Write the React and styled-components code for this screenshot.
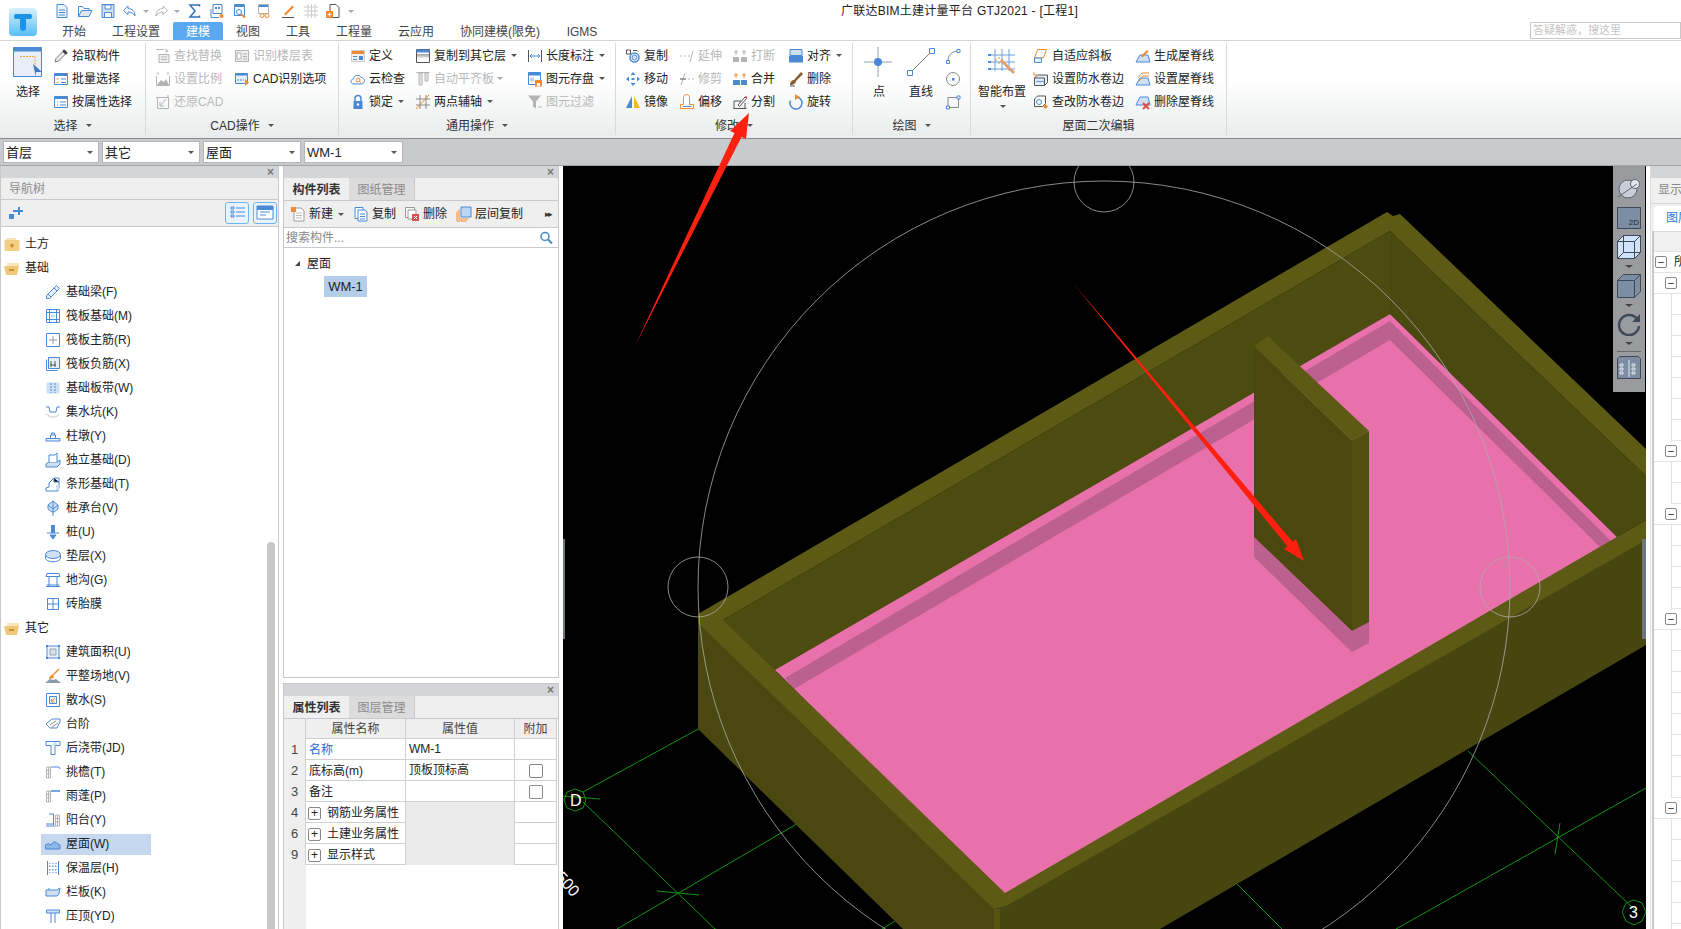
import React from 'react';
import styled, { createGlobalStyle } from 'styled-components';

const GlobalStyle = createGlobalStyle`
    html, body {
        margin: 0;
        padding: 0;
        background: #fff;
        font-family: "Liberation Sans", "Noto Sans CJK SC", sans-serif;
        font-size: 12px;
        color: #222;
    }
`;

const B = '#4a8ad4';
const L = '#dce8f6';
const G = '#b4b4b4';
const O = '#f08a30';
const K = '#555';

const line = { fill: 'none', stroke: B, strokeWidth: 1 };
const gray = { fill: 'none', stroke: G, strokeWidth: 1 };

const icons = {
    // quick access
    qNew: <><path d="M3 1.500h7l3 3v10H3z" fill="#eef4fb" stroke={B} /><path d="M5 7h6M5 9.500h6M5 12h6" stroke={B} /></>,
    qOpen: <><path d="M1.500 13.500v-10h4l1.500 2h5v2" fill="none" stroke={B} /><path d="M1.500 13.500l3-6h10.500l-3 6z" fill={L} stroke={B} /></>,
    qSave: <><path d="M2 1.500h12v13H2z" fill="#cfe0f5" stroke={B} /><path d="M5 2h6v4H5zM4.500 9.500h7v5h-7z" fill="#fff" stroke={B} /></>,
    qUndo: <><path d="M6 3L1.500 7.500 6 11.500V9c3 0 5 1 7 4 0-5-3-7.500-7-7.500z" fill="#fff" stroke={B} /></>,
    qRedo: <><path d="M10 3l4.500 4.500L10 11.500V9c-3 0-5 1-7 4 0-5 3-7.500 7-7.500z" fill="#fff" stroke={G} /></>,
    qSum: <path d="M12.500 3.500v-1.500h-9.500l5 6-5 6h9.500v-1.500" fill="none" stroke="#3470b8" strokeWidth="1.500" />,
    qRep1: <><path d="M4 1.500h9v9H4z" fill="#fff" stroke={B} /><path d="M6 4h2v2H6zM9 4h2v2H9z" fill={B} /><path d="M2 6v8.500h8" fill="none" stroke={B} /><circle cx="12.500" cy="13" r="2" fill={O} /></>,
    qRep2: <><path d="M2.500 1.500h10v11h-10z" fill="#fff" stroke={B} /><path d="M3 2h9v2H3z" fill={B} /><circle cx="7" cy="9" r="2.500" fill="none" stroke={B} /><path d="M9 11l4 3.500" stroke={O} strokeWidth="2" /></>,
    qRep3: <><path d="M2.500 1.500h10v9h-10z" fill="#fff" stroke={G} /><path d="M3 2h9v2H3z" fill={B} /><circle cx="6" cy="12.500" r="2" fill="#fff" stroke={O} /><circle cx="11" cy="12.500" r="2" fill="#fff" stroke={O} /></>,
    qBrush: <><path d="M4 11L12.500 2.500l1.500 1.500L5.500 12.500z" fill={O} /><path d="M2 14.500h12" stroke={K} /></>,
    qGrid: <path d="M1 4h14M1 8h14M1 12h14M5 1v14M8.500 1v14M12 1v14" fill="none" stroke="#ccc" />,
    qDoc: <><path d="M5 1.500h6l3 3v10H5z" fill="#fff" stroke={K} /><path d="M1 8h7v7H1z" fill={O} /><path d="M4.500 9.500v4M2.500 11.500h4" stroke="#fff" /></>,
    // select group
    pick: <><path d="M2 14l1-3.500 7-7 2.500 2.500-7 7z" fill="#eee" stroke="#777" /><path d="M10 2l1.500-.5 3 3-.5 1.500-1.500.5-3-3z" fill="#444" /></>,
    batch: <><path d="M1.500 2.500h13v11h-13z" fill="#fff" stroke={B} /><path d="M1.500 2.500h13v2.500h-13z" fill={B} /><path d="M3.500 7.500l1 1 1.500-1.500M3.500 11l1 1 1.500-1.500" fill="none" stroke={O} /><path d="M8 8h5M8 11.500h5" stroke={B} /></>,
    attr: <><path d="M1.500 2.500h13v11h-13z" fill="#fff" stroke={B} /><path d="M1.500 2.500h13v2.500h-13z" fill={B} /><path d="M4 8h1M4 11h1M7 8h6M7 11h6" stroke={B} /></>,
    find: <><path d="M1 1.500h8M10 1l3 2-3 1" {...gray} /><path d="M4 6.500h10v8H4z" fill="#eee" stroke={G} /><path d="M6 9h6M6 11.500h6" stroke={G} /></>,
    scale: <><path d="M1.500 5v9.500h13V5" {...gray} /><path d="M2 14l4-5 3 2 2-3 3 6z" fill={G} /><path d="M3 1v3M13 1v3" {...gray} /></>,
    restore: <><path d="M2.500 3.500h11v11h-11z" {...gray} /><path d="M11 5L5 12M5 8v4h4" {...gray} /><path d="M1 3.500h2M13 1v3" {...gray} /></>,
    floorTab: <><path d="M1.500 2.500h13v11h-13z" fill="#eee" stroke={G} /><path d="M3 5h4v6H3z" fill="#fff" stroke={G} /><path d="M9 6h4M9 8.500h4M9 11h4" stroke={G} /></>,
    cadOpt: <><path d="M1.500 2.500h12v10h-12z" fill="#e6effa" stroke={B} /><path d="M1.500 2.500h12v2h-12z" fill={B} /><path d="M3 9h7" stroke={B} strokeDasharray="2 1" /><path d="M11 8v7l4-3.500z" fill={O} /></>,
    // general group
    define: <><path d="M1.500 2.500h13v11h-13z" fill="#f2f2f2" stroke="#ccc" /><path d="M2 3h12v3H2z" fill={O} /><path d="M3 8h4v1H3zM3 11h4v1H3zM9 8h4v4H9z" fill={B} /></>,
    cloud: <><path d="M4 13c-4 0-4-5-.500-5 0-4 6-5 7.500-1.500 4-.5 5 6.500 0 6.500z" fill="#fff" stroke={B} /><circle cx="8" cy="9" r="2" fill="none" stroke={O} /><path d="M9.500 10.500l1.500 1.500" stroke={O} /></>,
    lock: <><path d="M5 7V4.500a3 3 0 0 1 6 0V7" fill="none" stroke={B} strokeWidth="1.500" /><path d="M3.500 7h9v8h-9z" fill={B} /><circle cx="8" cy="10.500" r="1.200" fill="#fff" /></>,
    copyFloor: <><path d="M1.500 1.500h13v13h-13z" fill="#fff" stroke={K} /><path d="M1.500 1.500h13v3h-13z" fill={B} /><path d="M1.500 7h13" stroke={K} /><path d="M2 7.500h12v2H2z" fill="#ccc" /></>,
    autoAlign: <><path d="M1.500 1.500h13" {...gray} /><path d="M4 2v12h3V2zM10 2h3v8h-3z" fill="#e4e4e4" stroke={G} /></>,
    twoPoint: <><path d="M1 5h14M1 11h14M5 1v14M11 1v14" fill="none" stroke="#888" /><path d="M1 15L14 1" stroke={O} /></>,
    lenDim: <><path d="M1.500 2v12M14.500 2v12" stroke={K} /><path d="M3 8h10M5 6L3 8l2 2M11 6l2 2-2 2" fill="none" stroke={B} /></>,
    saveEl: <><path d="M1.500 1.500h12v12h-12z" fill="#fff" stroke={B} /><path d="M1.500 1.500h12v3h-12z" fill={B} /><path d="M3 6.500h4v4H3z" fill="#bcd4ef" /><path d="M8 9h7v6.500H8z" fill={O} /><path d="M10 12h3v3h-3z" fill="#fff" /></>,
    filter: <><path d="M1 1.500h13l-5 6v7l-3-2v-5z" fill={G} /><path d="M11 13h4" stroke={G} /></>,
    // modify group
    copy: <><path d="M1.500 2h4v4h-4z" fill="#fff" stroke={K} /><circle cx="9.500" cy="9.500" r="4.500" fill="#fff" stroke={B} strokeWidth="1.500" /><circle cx="9.500" cy="9.500" r="2.500" fill="#cfe0f5" stroke={B} /><path d="M8 2.500h4l1 1" fill="none" stroke={K} /></>,
    move: <path d="M8 1l2.500 3h-5zM8 15l2.500-3h-5zM1 8l3-2.500v5zM15 8l-3-2.500v5zM6.500 7h3v2h-3z" fill={B} />,
    mirror: <><path d="M7 2v12H1z" fill={B} /><path d="M9 2v12h6z" fill="#f8b820" /></>,
    extend: <><path d="M1 8h2M5 8h2M9 8h2" {...gray} /><path d="M11 14l3-11" {...gray} /></>,
    trim: <><path d="M2 14L6 2" {...gray} /><path d="M1 8h6" stroke={K} /><path d="M9 8h2M13 8h2" {...gray} /></>,
    offset: <><path d="M1.500 14.500v-4h3V3.500a3 3 0 0 1 6 0v7h4v4z" fill="#fff" stroke={O} /><path d="M3.500 12.500h9" stroke={B} /></>,
    breakI: <><path d="M1 9h6v5H1zM9 9h6v5H9z" fill={G} /><path d="M4 2v5M2 4h4M12 2v5M10 4h4" stroke={G} /></>,
    merge: <><path d="M1 9h14v5H1z" fill={B} /><path d="M8.500 9v5" stroke="#fff" /><path d="M4 2v5M2 4h4M12 2v5M10 4h4" stroke={O} /></>,
    split: <><path d="M1.500 14.500h13M2 7h7" stroke={K} /><path d="M2 7v7.500M13 9v5.500" stroke={K} /><path d="M6 11L13 3l1.500 1.500-7 8z" fill="#fff" stroke={K} /><path d="M13 3l1-1 1.500 1.500-1 1z" fill="#d04030" /></>,
    align: <><path d="M2 1.500h12v6H2z" fill="#cfe0f5" stroke={B} /><path d="M1 8h14v6.500H1z" fill={B} /></>,
    del: <><path d="M2 15h5" stroke={K} /><path d="M2 14c0-3 2-5 4-5l7-8 2 2-7 7c0 2-2 4-6 4z" fill="#8a5a30" /></>,
    rotate: <><path d="M8 3a6 6 0 1 1-5.500 3.500" fill="none" stroke={B} strokeWidth="1.500" /><path d="M7 0l5 3-5 3z" fill={O} /></>,
    // drawing
    bigDot: <><path d="M14 0v30M0 15h28" stroke="#8ea2b8" /><circle cx="14" cy="15" r="4" fill={B} /></>,
    bigLine: <><path d="M4 26L26 4" stroke="#777" /><path d="M1.500 23.500h5v5h-5zM23.500 1.500h5v5h-5z" fill="#fff" stroke={B} /></>,
    arc: <><path d="M3 13C3 7 7 3 13 3" fill="none" stroke="#888" /><path d="M1.500 12.500h3v3h-3zM12 1.500h3v3h-3z" fill="#fff" stroke={B} /></>,
    circle: <><circle cx="8" cy="8" r="6.500" fill="#fff" stroke="#888" /><path d="M7 7h2.500v2.500H7z" fill={B} /></>,
    rect: <><path d="M3 3.500h10.500v10H3z" fill="none" stroke="#888" /><path d="M1.500 12h3v3h-3zM12 2h3v3h-3z" fill="#fff" stroke={B} /></>,
    bigSmart: <><path d="M8 2v22M15 2v22M22 2v22M2 8h26M2 15h26M2 22h26" fill="none" stroke="#6aa0de" /><path d="M1 7h3v2H1zM1 14h3v2H1zM1 21h3v2H1z" fill={B} /><path d="M13 14l13 13 2-2-13-13z" fill="#e2a070" /><path d="M12 10v2M12 15v2M8 13h2M14 13h2" stroke={O} /></>,
    // roof group
    slope: <><path d="M1.500 10l3-8.500h9l-3 8.500z" fill="#fff" stroke={O} /><path d="M1.500 10h7v4.500h-7z" fill="#e6effa" stroke={B} /></>,
    waterSet: <><path d="M1.500 7l3-3h10v7.500l-3 3h-10z" fill="#e6effa" stroke={K} /><path d="M1.500 7h10v7.500" fill="none" stroke={K} /><path d="M3 11l2-1 2 1 2-1 2 1" fill="none" stroke={B} /><path d="M1 1v3h3" fill="none" stroke={O} /></>,
    waterEdit: <><path d="M1.500 5l3-3h8v7.500l-3 3h-8z" fill="#fff" stroke={K} /><circle cx="6" cy="8" r="2.500" fill="none" stroke={B} /><path d="M12.500 10l2.500 2.500-2.500 2.500-2.500-2.500z" fill={O} /></>,
    ridgeGen: <><path d="M1 14l4-7h8l2 7z" fill="#cfe0f5" stroke={B} /><path d="M6 8l6-6 1.500 1.500-6 6z" fill={O} /></>,
    ridgeSet: <><path d="M1 14l4-7h8l2 7z" fill="#cfe0f5" stroke={B} /><path d="M3 7l4-5h7M4 10l4-5h6" fill="none" stroke={O} /></>,
    ridgeDel: <><path d="M1 11l4-8h8l2 8z" fill="#cfe0f5" stroke={B} /><path d="M8 9l6 6M14 9l-6 6" stroke="#e05040" strokeWidth="2" /></>,
    // tree
    folderPlus: <><path d="M.5 4h15v11H.5z" fill="#f3cf85" /><path d="M2 2h10v2H2z" fill="#f8e4b8" /><path d="M6 9.500h4M8 7.500v4" stroke="#c89030" strokeWidth="1.500" /></>,
    folderMinus: <><path d="M3 3h12v3H3z" fill="#f8e4b8" /><path d="M0 6h15l-2 9H2z" fill="#f0c878" /><path d="M5 10h5" stroke="#b08028" strokeWidth="1.500" /></>,
    beam: <><path d="M1.500 14.500v-3L11.500 1.500l3 3-10 10z" fill="#e6effa" stroke={B} /><path d="M3 10l3 3M9 4l3 3" stroke={B} /></>,
    raftM: <><path d="M1.500 1.500h13v13h-13z" fill="#fff" stroke={B} /><path d="M1.500 4.500h13M1.500 11.500h13M4.500 1.500v13M11.500 1.500v13" stroke={B} /><path d="M6 6.500h4v3H6z" fill="#cfe0f5" /></>,
    raftR: <><path d="M1.500 1.500h13v13h-13z" fill="#fff" stroke={B} /><path d="M8 4v8M4 8h8" stroke="#999" /></>,
    raftX: <><path d="M3.500 1.500h11v11h-11z" fill="#e6effa" stroke={B} /><path d="M1.500 3.500v11h11" fill="none" stroke={B} /><path d="M6 5v6M10 5v6M5 9h6" stroke={K} /></>,
    stripB: <><path d="M1.500 2.500h13v11h-13z" fill="#cfe0f5" /><path d="M6 3v10M10 3v10" stroke={B} strokeDasharray="2 1" /></>,
    pit: <><path d="M1 3h3l1 5h6l1-5h3" {...line} /><path d="M1.500 10c3 4 10 4 13 0" fill="none" stroke="#999" strokeDasharray="1 1" /></>,
    pier: <><path d="M1 10.500h14v2.500H1z" fill="#e6effa" stroke={B} /><path d="M5.500 10V7h5v3M6.500 7V5h3v2" {...line} /></>,
    isolated: <><path d="M1 12l3-2h8l3-2v4l-3 3H1z" fill="#cfe0f5" stroke={B} /><path d="M4 10V3h6l2-2v9" fill="#fff" stroke={B} /></>,
    stripF: <><path d="M1 15v-3l3-1V7l5-5h5v9l-1 4z" fill="#fff" stroke={B} /><path d="M9 2v4l5 0" stroke={B} /><path d="M11 9h3v5h-3z" fill="#cfe0f5" /></>,
    cap: <><path d="M8 1l5 4v4l-4 3H7L3 9V5z" fill="#cfe0f5" stroke={B} /><path d="M8 1v15M3 5l5 4 5-4" {...line} /></>,
    pile: <><path d="M6 1h4v8H6z" fill={B} /><path d="M2 9h12M5 11h6l-3 4z" stroke={B} fill={B} /></>,
    cushion: <><ellipse cx="8" cy="6.500" rx="7.500" ry="4" fill="#cfe0f5" stroke={B} /><path d="M.5 7v3c0 5 15 5 15 0V7" {...line} /></>,
    trench: <path d="M2 1.500h12l1 3H1zM1 14.500h14M4 5v9M12 5v9M1.500 13h13" {...line} />,
    brick: <path d="M2.500 2.500h11v11h-11zM8 2.500v11M2.500 8h11" {...line} />,
    area: <><path d="M2 2h12v12H2z" fill="#eef4fb" stroke={B} /><path d="M5 5h6v6H5z" fill="#dde" stroke="#8aa" /><path d="M1 1h2v2H1zM13 1h2v2h-2zM1 13h2v2H1zM13 13h2v2h-2z" fill={B} /></>,
    site: <><path d="M0 15l5-4 3 1 3-1 5 4z" fill="#8a9aae" /><path d="M4 11c0-3 2-4 4-4l1 3z" fill={O} /><path d="M7 8l7-7" stroke={O} strokeWidth="1.500" /></>,
    apron: <><path d="M1.500 1.500h13v13h-13z" fill="#fff" stroke={B} /><path d="M4.500 4.500h7v7h-7z" fill="#e6effa" stroke={B} /><path d="M10 6L6.500 9.500M6.500 7v3h3" fill="none" stroke={O} /></>,
    step: <><path d="M1 8l6-5h8v3l-3 6H5z" fill="#fff" stroke={B} /><path d="M5 9l6-4M7 11l6-4" stroke="#888" /></>,
    post: <><path d="M1 1.500h14v4H10v9H6v-9H1z" fill="#fff" stroke={B} /><path d="M7 6c0-2 2-4 4-4l1 3z" fill="#cfe0f5" /></>,
    eave: <><path d="M1.500 3h4v11h-4zM1.500 6.500h4M1.500 10h4M3.500 3v11" {...gray} /><path d="M6 3h8l1 2" {...line} /></>,
    canopy: <><path d="M1.500 3h4v11h-4zM1.500 6.500h4M1.500 10h4M3.500 3v11" {...gray} /><path d="M6 3h9" stroke={B} strokeWidth="1.500" /></>,
    balcony: <><path d="M10.500 3h4v11h-4zM10.500 6.500h4M10.500 10h4M12.500 3v11" {...gray} /><path d="M4 2h5M8.500 2v11M1 12h7M1 14h9" {...line} /></>,
    roof: <path d="M0.500 13v-4l3-1.500L6 9l3-3.500 6 3.500v4z" fill="#8db6e6" stroke={B} />,
    insul: <><path d="M2.500 1v14M13.500 1v14" stroke={B} /><path d="M5 3v10M8 3v10M11 3v10" stroke={B} strokeDasharray="1 2" /><path d="M4 6h8M4 10h8" stroke={B} strokeDasharray="1 2" /></>,
    rail: <><path d="M1 6h11l3-2-1 6-2 2H1z" fill="#cfe0f5" stroke={B} /><path d="M4 4v2" stroke={B} /></>,
    coping: <><path d="M1.500 2h13v3h-13z" fill="#cfe0f5" stroke={B} /><path d="M6 5v10M10 5v10" stroke={B} /></>,
    // panels
    wand: <path d="M2 9h5v5H2zM8 5h-2v2h2zM11 2h2v3h3v2h-3v3h-2V7H8V5h3z" fill={B} />,
    listA: <path d="M4 4h3v2H4zM4 8h3v2H4zM4 12h3v2H4zM9 5h9M9 9h9M9 13h9" {...line} />,
    listB: <><path d="M2 3h16v13H2z" fill="#fff" stroke={B} /><path d="M2 3h16v4H2z" fill={B} /><path d="M5 9h10M5 12h6" stroke={B} /></>,
    newItem: <><path d="M4 2h7l3 3v10H4z" fill="#fff" stroke="#999" /><path d="M6 7h6M6 9.500h6M6 12h6" stroke="#bbb" /><path d="M1 1h5v5H1z" fill={O} /></>,
    copyItem: <><path d="M2 1.500h8v11H2z" fill="#fff" stroke={B} /><path d="M5 4h7l2 2v9H5z" fill="#fff" stroke={B} /><path d="M7 8h5M7 10.500h5M7 13h5" stroke={B} /></>,
    delItem: <><path d="M1.500 1.500h9v10h-9z" fill="#fff" stroke="#999" /><path d="M4 4h8v9H4z" fill="#fff" stroke="#999" /><path d="M8 8h7v7H8z" fill="#d85050" /><path d="M10 10l3 3M13 10l-3 3" stroke="#fff" /></>,
    layerCopy: <><path d="M5 1h10v10H5z" fill="#bcd8f8" stroke={B} /><path d="M3 3.500v9.500h9.500M1 5.500v9.500h9.500" fill="none" stroke={O} /></>,
    search: <><circle cx="7" cy="6.500" r="4" fill="none" stroke="#3f8bc4" strokeWidth="1.500" /><path d="M10 9.500l4 4" stroke="#3f8bc4" strokeWidth="2" /></>,
};

const Svg = styled.svg`
    display: block;
    flex: none;
`;

const Icon = ({ name, size = 16, box = 16 }) => (
    <Svg width={size} height={size} viewBox={`0 0 ${box} ${box}`}>{icons[name]}</Svg>
);

const quickItems = [
    ['qNew', 22], ['qOpen', 23], ['qSave', 23], ['qUndo', 21], [null, 11], ['qRedo', 20], [null, 12],
    ['qSum', 23], ['qRep1', 22], ['qRep2', 24], ['qRep3', 24], ['qBrush', 24], ['qGrid', 21], ['qDoc', 24], [null, 12],
];

const tabs = [
    ['开始', 60], ['工程设置', 64], ['建模', 50, true], ['视图', 40], ['工具', 60], ['工程量', 52], ['云应用', 72], ['协同建模(限免)', 96], ['IGMS', 68],
];

const ribbonGroups = [
    {
        label: '选择', caret: true, width: 146, pad: 13,
        cols: [
            { big: { icon: 'bigSelect', text: '选择' }, width: 40 },
            { items: [{ i: 'pick', t: '拾取构件' }, { i: 'batch', t: '批量选择' }, { i: 'attr', t: '按属性选择' }] },
        ],
    },
    {
        label: 'CAD操作', caret: true, width: 193, pad: 9,
        cols: [
            { width: 79, items: [{ i: 'find', t: '查找替换', off: true }, { i: 'scale', t: '设置比例', off: true }, { i: 'restore', t: '还原CAD', off: true }] },
            { items: [{ i: 'floorTab', t: '识别楼层表', off: true }, { i: 'cadOpt', t: 'CAD识别选项' }] },
        ],
    },
    {
        label: '通用操作', caret: true, width: 277, pad: 11,
        cols: [
            { width: 65, items: [{ i: 'define', t: '定义' }, { i: 'cloud', t: '云检查' }, { i: 'lock', t: '锁定', c: true }] },
            { width: 112, items: [{ i: 'copyFloor', t: '复制到其它层', c: true }, { i: 'autoAlign', t: '自动平齐板', c: true, off: true }, { i: 'twoPoint', t: '两点辅轴', c: true }] },
            { items: [{ i: 'lenDim', t: '长度标注', c: true }, { i: 'saveEl', t: '图元存盘', c: true }, { i: 'filter', t: '图元过滤', off: true }] },
        ],
    },
    {
        label: '修改', caret: true, width: 237, pad: 9,
        cols: [
            { width: 54, items: [{ i: 'copy', t: '复制' }, { i: 'move', t: '移动' }, { i: 'mirror', t: '镜像' }] },
            { width: 53, items: [{ i: 'extend', t: '延伸', off: true }, { i: 'trim', t: '修剪', off: true }, { i: 'offset', t: '偏移' }] },
            { width: 56, items: [{ i: 'breakI', t: '打断', off: true }, { i: 'merge', t: '合并' }, { i: 'split', t: '分割' }] },
            { items: [{ i: 'align', t: '对齐', c: true }, { i: 'del', t: '删除' }, { i: 'rotate', t: '旋转' }] },
        ],
    },
    {
        label: '绘图', caret: true, width: 118, pad: 11,
        cols: [
            { big: { icon: 'bigDot', text: '点' }, width: 42 },
            { big: { icon: 'bigLine', text: '直线' }, width: 39 },
            { items: [{ i: 'arc' }, { i: 'circle' }, { i: 'rect' }] },
        ],
    },
    {
        label: '屋面二次编辑', width: 256, pad: 16,
        cols: [
            { big: { icon: 'bigSmart', text: '智能布置', caret: true }, width: 46 },
            { width: 102, items: [{ i: 'slope', t: '自适应斜板' }, { i: 'waterSet', t: '设置防水卷边' }, { i: 'waterEdit', t: '查改防水卷边' }] },
            { items: [{ i: 'ridgeGen', t: '生成屋脊线' }, { i: 'ridgeSet', t: '设置屋脊线' }, { i: 'ridgeDel', t: '删除屋脊线' }] },
        ],
    },
];

const treeRows = [
    { top: 'plus', t: '土方' }, { top: 'minus', t: '基础' },
    { i: 'beam', t: '基础梁(F)' }, { i: 'raftM', t: '筏板基础(M)' }, { i: 'raftR', t: '筏板主筋(R)' }, { i: 'raftX', t: '筏板负筋(X)' },
    { i: 'stripB', t: '基础板带(W)' }, { i: 'pit', t: '集水坑(K)' }, { i: 'pier', t: '柱墩(Y)' }, { i: 'isolated', t: '独立基础(D)' },
    { i: 'stripF', t: '条形基础(T)' }, { i: 'cap', t: '桩承台(V)' }, { i: 'pile', t: '桩(U)' }, { i: 'cushion', t: '垫层(X)' },
    { i: 'trench', t: '地沟(G)' }, { i: 'brick', t: '砖胎膜' },
    { top: 'minus', t: '其它' },
    { i: 'area', t: '建筑面积(U)' }, { i: 'site', t: '平整场地(V)' }, { i: 'apron', t: '散水(S)' }, { i: 'step', t: '台阶' },
    { i: 'post', t: '后浇带(JD)' }, { i: 'eave', t: '挑檐(T)' }, { i: 'canopy', t: '雨蓬(P)' }, { i: 'balcony', t: '阳台(Y)' },
    { i: 'roof', t: '屋面(W)', active: true }, { i: 'insul', t: '保温层(H)' }, { i: 'rail', t: '栏板(K)' }, { i: 'coping', t: '压顶(YD)' },
];

const propRows = [
    { n: 1, name: '名称', value: 'WM-1', blue: true },
    { n: 2, name: '底标高(m)', value: '顶板顶标高', check: true },
    { n: 3, name: '备注', value: '', check: true },
    { n: 4, name: '钢筋业务属性', group: true },
    { n: 6, name: '土建业务属性', group: true },
    { n: 9, name: '显示样式', group: true },
];

const layerRows = Array.from({ length: 33 }, (_, k) => ({
    level: k === 0 ? 0 : [1, 9, 12, 17, 26].includes(k) ? 1 : 2,
    label: k === 0 ? '所有构件' : '',
}));

const App = () => (
    <>
        <GlobalStyle />
        <Page>
            <TitleBar>
                <LogoCell>
                    <svg width="28" height="28" viewBox="0 0 28 28">
                        <defs>
                            <linearGradient id="lg" x1="0" y1="0" x2="0" y2="1">
                                <stop offset="0" stopColor="#d8f1fd" />
                                <stop offset="1" stopColor="#58bdf3" />
                            </linearGradient>
                        </defs>
                        <rect width="28" height="28" rx="4" fill="url(#lg)" />
                        <path d="M5 8.500c0-2 1-2.500 2.500-2.500h13c1.500 0 2.500.5 2.500 2.500s-1 2.500-2.500 2.500H17v9c0 2-1 3-3 3s-3-1-3-3v-9H7.500C6 11 5 10.500 5 8.500z" fill="#1d93e8" />
                    </svg>
                </LogoCell>
                <TitleRows>
                    <QuickRow>
                        {quickItems.map(([name, w], idx) => (
                            <QuickCell key={idx} $w={w}>
                                {name ? <Icon name={name} /> : <Caret $dim />}
                            </QuickCell>
                        ))}
                        <AppTitle>广联达BIM土建计量平台 GTJ2021 - [工程1]</AppTitle>
                    </QuickRow>
                    <TabRow>
                        {tabs.map(([t, w, on]) => (
                            <Tab key={t} $w={w} $on={on}>{t}</Tab>
                        ))}
                        <HelpSearch>答疑解惑，搜这里</HelpSearch>
                    </TabRow>
                </TitleRows>
            </TitleBar>

            <Ribbon>
                {ribbonGroups.map((g) => (
                    <RibbonGroup key={g.label} $w={g.width}>
                        <GroupBody $pad={g.pad}>
                            {g.cols.map((c, idx) => (
                                <GroupCol key={idx} $w={c.width}>
                                    {c.big ? (
                                        <BigButton>
                                            <BigIcon>
                                                {c.big.icon === 'bigSelect' ? (
                                                    <svg width="30" height="31" viewBox="0 0 30 31">
                                                        <path d="M.5 .5h28v29H.5z" fill="#e8eef8" stroke="#4a8ad4" />
                                                        <path d="M.5 .5h28v4H.5z" fill="#4a8ad4" />
                                                        <path d="M7 9.500h15v13" fill="none" stroke="#f0a030" strokeDasharray="2 1" />
                                                        <path d="M20 17l9 8h-6v5z" fill="#3f7cc4" />
                                                    </svg>
                                                ) : (
                                                    <Icon name={c.big.icon} size={30} box={30} />
                                                )}
                                            </BigIcon>
                                            <BigText>{c.big.text}</BigText>
                                            {c.big.caret && <Caret />}
                                        </BigButton>
                                    ) : (
                                        c.items.map((it) => (
                                            <RibbonItem key={it.i} $off={it.off}>
                                                <Icon name={it.i} />
                                                {it.t && <span>{it.t}</span>}
                                                {it.c && <Caret $dim={it.off} />}
                                            </RibbonItem>
                                        ))
                                    )}
                                </GroupCol>
                            ))}
                        </GroupBody>
                        <GroupLabel>
                            {g.label}
                            {g.caret && <Caret />}
                        </GroupLabel>
                    </RibbonGroup>
                ))}
            </Ribbon>

            <ComboBar>
                {['首层', '其它', '屋面', 'WM-1'].map((t, idx) => (
                    <Combo key={t} $w={[96, 98, 98, 99][idx]}>
                        <span>{t}</span>
                        <Caret />
                    </Combo>
                ))}
            </ComboBar>

            <Main>
                <NavPanel>
                    <PanelHead><CloseMark>×</CloseMark></PanelHead>
                    <NavTitle>导航树</NavTitle>
                    <NavTools>
                        <Icon name="wand" />
                        <NavToolBtns>
                            <NavBtn $w={24}><Icon name="listA" size={20} box={20} /></NavBtn>
                            <NavBtn $w={24}><Icon name="listB" size={20} box={20} /></NavBtn>
                        </NavToolBtns>
                    </NavTools>
                    <Tree>
                        {treeRows.map((r) =>
                            r.top ? (
                                <TreeTop key={r.t}>
                                    <Icon name={r.top === 'plus' ? 'folderPlus' : 'folderMinus'} />
                                    {r.t}
                                </TreeTop>
                            ) : (
                                <TreeLeafRow key={r.t}>
                                    <TreeLeaf $on={r.active}>
                                        <Icon name={r.i} />
                                        {r.t}
                                    </TreeLeaf>
                                </TreeLeafRow>
                            ),
                        )}
                        <ScrollThumb />
                    </Tree>
                </NavPanel>

                <MiddleColumn>
                    <ListPanel>
                        <PanelHead><CloseMark>×</CloseMark></PanelHead>
                        <PanelTabs>
                            <PanelTab $on>构件列表</PanelTab>
                            <PanelTab>图纸管理</PanelTab>
                        </PanelTabs>
                        <ListTools>
                            <ListTool $w={63}><Icon name="newItem" />新建<Caret /></ListTool>
                            <ListTool $w={51}><Icon name="copyItem" />复制</ListTool>
                            <ListTool $w={52}><Icon name="delItem" />删除</ListTool>
                            <ListTool $w={85}><Icon name="layerCopy" />层间复制</ListTool>
                            <MoreMark>▸▸</MoreMark>
                        </ListTools>
                        <SearchRow>
                            搜索构件...
                            <Icon name="search" />
                        </SearchRow>
                        <ListTree>
                            <ListGroup><Triangle />屋面</ListGroup>
                            <ListEntry>WM-1</ListEntry>
                        </ListTree>
                    </ListPanel>

                    <PropPanel>
                        <PanelHead><CloseMark>×</CloseMark></PanelHead>
                        <PanelTabs>
                            <PanelTab $on>属性列表</PanelTab>
                            <PanelTab>图层管理</PanelTab>
                        </PanelTabs>
                        <PropTable>
                            <PropRow $head>
                                <NumCell />
                                <HeadCell>属性名称</HeadCell>
                                <HeadCell>属性值</HeadCell>
                                <HeadCell>附加</HeadCell>
                            </PropRow>
                            {propRows.map((r) => (
                                <PropRow key={r.n}>
                                    <NumCell>{r.n}</NumCell>
                                    <NameCell $blue={r.blue}>
                                        {r.group && <PlusBox>+</PlusBox>}
                                        {r.name}
                                    </NameCell>
                                    <ValueCell $group={r.group}>{r.value}</ValueCell>
                                    <ExtraCell>{r.check && <CheckBox />}</ExtraCell>
                                </PropRow>
                            ))}
                            <PropFiller />
                        </PropTable>
                    </PropPanel>
                </MiddleColumn>

                <Canvas>
                    <svg width="1083" height="763" viewBox="563 166 1083 763" style={{ display: 'block' }}>
                        <rect x="563" y="166" width="1083" height="763" fill="#000" />
                        <g stroke="#0e960e" strokeWidth="1" fill="none">
                            <path d="M583 792L700 728M583 802L715 929M617 929L800 822M657 891L699 895M563 796L600 799" />
                            <path d="M1468 751L1635 910M1396 929L1646 788M1560 823L1555 854M1236 883L1282 929M882 929L900 918" />
                            <polygon points="575,789 583,792 586,800 583,808 575,811 567,808 564,800 567,792" />
                            <polygon points="1634,900 1642,903 1646,912 1642,921 1634,925 1626,921 1622,912 1626,903" />
                        </g>
                        <path d="M698 614V729L903 929H994V912L1005 900Z" fill="#4a4810" />
                        <path d="M994 900L1646 530V645L1160 929H994Z" fill="#484610" />
                        <path d="M723 620L1390 231V314L778 672L770 680L715 628Z" fill="#4c4b10" />
                        <path d="M1390 231L1646 476V520L1617 537L1390 314Z" fill="#4a4a10" />
                        <path d="M775 670L1390 314L1617 537L1620 545L1005 900Z" fill="#e871ab" />
                        <path d="M785 678L1390 321L1611 541L1600 547L1390 340L794 689Z" fill="#bc6090" />
                        <path d="M698 614L1387 212L1393 216L1400 214L1646 449V476L1390 231L723 620L1005 893L1646 520V540L1008 905L994 909L698 623Z" fill="#5c5a14" />
                        <path d="M994 909H1000V929H994Z" fill="#55530f" />
                        <path d="M1254 537L1352 631L1369 622V643L1352 652L1254 557Z" fill="#bc6090" />
                        <path d="M1254 346L1352 440.500V631L1254 537Z" fill="#4a480e" />
                        <path d="M1352 440.500L1369 431V622L1352 631Z" fill="#514f10" />
                        <path d="M1254 346L1268 336L1369 431L1352 440.500Z" fill="#5c5a14" />
                        <g fill="none" stroke="#ababab" strokeWidth="0.800">
                            <circle cx="1104" cy="587" r="406" />
                            <circle cx="698" cy="587" r="30" />
                            <circle cx="1510" cy="587" r="30" />
                            <circle cx="1104" cy="182" r="30" />
                        </g>
                        <CanvasLabel x="570" y="806">D</CanvasLabel>
                        <CanvasLabel x="1629" y="918">3</CanvasLabel>
                        <CanvasLabel x="547" y="885" transform="rotate(48 559 890)">500</CanvasLabel>
                    </svg>
                    <SplitHandle $side="left" />
                    <SplitHandle $side="right" />
                    <ViewTools>
                        <GlobeWrap>
                            <svg width="24" height="21" viewBox="0 0 24 21" style={{ display: 'block' }}>
                                <circle cx="11" cy="11" r="9" fill="#c9ced6" stroke="#5d6570" />
                                <circle cx="18" cy="6" r="4.500" fill="#e4e7ec" stroke="#5d6570" />
                                <path d="M1 19L20 6" stroke="#5d6570" />
                            </svg>
                        </GlobeWrap>
                        <ViewBox>2D</ViewBox>
                        <svg width="24" height="24" viewBox="0 0 24 24">
                            <path d="M.5 6.500L6.500 .5h17v17l-6 6H.5z" fill="#cfe3fb" stroke="#3f4a58" />
                            <path d="M.5 6.500h17v17M17.500 6.500l6-6M6.500 .5v17h17M6.500 17.500l-6 6" fill="none" stroke="#3f4a58" />
                        </svg>
                        <SmallDown />
                        <svg width="24" height="24" viewBox="0 0 24 24">
                            <path d="M.5 6.500L6.500 .5h17v17l-6 6H.5z" fill="#7d8ea4" stroke="#3f4a58" />
                            <path d="M.5 6.500h17v17M17.500 6.500l6-6" fill="none" stroke="#3f4a58" />
                        </svg>
                        <SmallDown />
                        <svg width="24" height="23" viewBox="0 0 24 23">
                            <path d="M20 6A10 10 0 1 0 22 13" fill="none" stroke="#3f4a58" strokeWidth="2.500" />
                            <path d="M23 1v8h-8z" fill="#3f4a58" />
                        </svg>
                        <SmallDown />
                        <ViewRule />
                        <svg width="24" height="23" viewBox="0 0 24 23">
                            <path d="M.5 2.500l2-2h19l2 2v20H.5z" fill="#7d8ea4" stroke="#3f4a58" />
                            <path d="M12 4v17M3 8h3v2H3zM3 12h3v2H3zM3 16h3v2H3zM15 8h3v2h-3zM15 12h3v2h-3zM15 16h3v2h-3z" fill="none" stroke="#e4e7ec" />
                        </svg>
                    </ViewTools>
                </Canvas>

                <LayerPanel>
                    <LayerInner>
                        <PanelHead />
                        <LayerTitle>显示设置</LayerTitle>
                        <LayerTabs><LayerTab>图层显示</LayerTab></LayerTabs>
                        <LayerGrid>
                            <LayerHead />
                            {layerRows.map((r, k) => (
                                <LayerRow key={k} $level={r.level}>
                                    {r.level < 2 && <MinusBox>−</MinusBox>}
                                    {r.label}
                                </LayerRow>
                            ))}
                        </LayerGrid>
                    </LayerInner>
                </LayerPanel>
            </Main>

            <ArrowLayer width="1681" height="929" viewBox="0 0 1681 929">
                <path d="M635 346L734.500 133L730 131L749 113L746 139L741.500 137Z" fill="#ff2010" />
                <path d="M1073 283L1292.700 541.800L1296 539L1304 561L1284 549L1287.300 546.200Z" fill="#ff2010" />
            </ArrowLayer>
        </Page>
    </>
);

export default App;

const Page = styled.div`
    position: relative;
    width: 1681px;
    height: 929px;
    overflow: hidden;
    display: flex;
    flex-direction: column;
    background: #fff;
    line-height: 16px;
`;

const TitleBar = styled.div`
    display: flex;
    height: 41px;
    flex: none;
    box-sizing: border-box;
    border-bottom: 1px solid #d6d6d6;
`;

const LogoCell = styled.div`
    width: 44px;
    flex: none;
    padding: 8px 0 0 9px;
    box-sizing: border-box;
`;

const TitleRows = styled.div`
    flex: 1;
    display: flex;
    flex-direction: column;
    min-width: 0;
`;

const QuickRow = styled.div`
    display: flex;
    align-items: center;
    height: 22px;
    padding-left: 7px;
`;

const QuickCell = styled.div`
    width: ${(p) => p.$w}px;
    flex: none;
    display: flex;
    justify-content: center;
`;

const AppTitle = styled.div`
    margin-left: 484px;
    color: #222;
    white-space: nowrap;
    letter-spacing: 0.25px;
`;

const TabRow = styled.div`
    display: flex;
    height: 18px;
    align-items: stretch;
`;

const Tab = styled.div`
    width: ${(p) => (p.$on ? 50 : p.$w)}px;
    margin: 0 ${(p) => (p.$on ? 5 : 0)}px;
    padding-top: 1px;
    display: flex;
    align-items: center;
    justify-content: center;
    white-space: nowrap;
    font-size: 12px;
    color: ${(p) => (p.$on ? '#fff' : '#444')};
    background: ${(p) => (p.$on ? '#5aa9ee' : 'transparent')};
    border-radius: 2px 2px 0 0;
`;

const HelpSearch = styled.div`
    margin-left: auto;
    width: 151px;
    height: 17px;
    box-sizing: border-box;
    border: 1px solid #c8c8c8;
    padding-left: 2px;
    color: #c4c4c4;
    font-size: 11px;
    line-height: 15px;
    white-space: nowrap;
`;

const Ribbon = styled.div`
    display: flex;
    flex: none;
    height: 98px;
    box-sizing: border-box;
    border-bottom: 1px solid #8a8c8e;
    background: linear-gradient(#fff 0, #fff 42%, #e9ecec 100%);
`;

const RibbonGroup = styled.div`
    width: ${(p) => p.$w}px;
    flex: none;
    box-sizing: border-box;
    border-right: 1px solid #d8dada;
    margin: 2px 0 3px;
    display: flex;
    flex-direction: column;
`;

const GroupBody = styled.div`
    display: flex;
    height: 73px;
    padding: 1px 0 0 ${(p) => p.$pad}px;
    box-sizing: border-box;
`;

const GroupCol = styled.div`
    width: ${(p) => (p.$w ? `${p.$w}px` : 'auto')};
    flex: none;
    display: flex;
    flex-direction: column;
`;

const RibbonItem = styled.div`
    height: 23px;
    display: flex;
    align-items: center;
    gap: 3px;
    white-space: nowrap;
    color: ${(p) => (p.$off ? '#b8b8b8' : '#222')};
`;

const BigButton = styled.div`
    width: 30px;
    display: flex;
    flex-direction: column;
    align-items: center;
    padding-top: 3px;
`;

const BigIcon = styled.div`
    height: 32px;
`;

const BigText = styled.div`
    margin-top: 4px;
    white-space: nowrap;
    height: 18px;
    display: flex;
    align-items: center;
    margin-bottom: 4px;
`;

const GroupLabel = styled.div`
    flex: 1;
    display: flex;
    align-items: center;
    justify-content: center;
    gap: 6px;
    color: #333;
    font-size: 12px;
`;

const Caret = styled.span`
    display: inline-block;
    flex: none;
    margin-left: ${(p) => (p.$dim ? 0 : 2)}px;
    width: 0;
    height: 0;
    border-left: 3px solid transparent;
    border-right: 3px solid transparent;
    border-top: 3px solid ${(p) => (p.$dim ? '#aaa' : '#555')};
`;

const ComboBar = styled.div`
    display: flex;
    flex: none;
    height: 27px;
    box-sizing: border-box;
    gap: 3px;
    padding: 2px 0 0 3px;
    background: #c8cacd;
    border-bottom: 1px solid #a2a5a8;
`;

const Combo = styled.div`
    width: ${(p) => p.$w}px;
    height: 22px;
    box-sizing: border-box;
    background: #fff;
    border: 1px solid #b4b6b8;
    display: flex;
    align-items: center;
    justify-content: space-between;
    padding: 1px 5px 0 2px;
    font-size: 13px;
`;

const Main = styled.div`
    flex: 1;
    display: flex;
    min-height: 0;
    background: #fff;
`;

const NavPanel = styled.div`
    width: 279px;
    flex: none;
    box-sizing: border-box;
    border-left: 1px solid #c8c8cc;
    border-right: 1px solid #c8c8cc;
    display: flex;
    flex-direction: column;
`;

const PanelHead = styled.div`
    height: 12px;
    flex: none;
    background: #d4d5d9;
    display: flex;
    justify-content: flex-end;
    align-items: center;
    padding-right: 4px;
`;

const CloseMark = styled.span`
    color: #777;
    font-size: 12px;
    font-weight: bold;
    line-height: 11px;
`;

const NavTitle = styled.div`
    height: 22px;
    flex: none;
    box-sizing: border-box;
    background: #efefef;
    border-bottom: 1px solid #c8c8d0;
    color: #8c8c8c;
    padding-left: 8px;
    font-size: 12px;
    line-height: 22px;
`;

const NavTools = styled.div`
    height: 27px;
    flex: none;
    box-sizing: border-box;
    background: #efefef;
    border-bottom: 1px solid #c8c8d0;
    display: flex;
    align-items: center;
    justify-content: space-between;
    padding: 0 1px 0 6px;
`;

const NavToolBtns = styled.div`
    display: flex;
    gap: 4px;
`;

const NavBtn = styled.div`
    width: ${(p) => p.$w}px;
    height: 22px;
    box-sizing: border-box;
    border: 1px solid #6fb4f2;
    border-radius: 3px;
    background: #e9f3fe;
    display: flex;
    align-items: center;
    justify-content: center;
`;

const Tree = styled.div`
    position: relative;
    flex: 1;
    padding-top: 5px;
    overflow: hidden;
`;

const TreeTop = styled.div`
    height: 24px;
    display: flex;
    align-items: center;
    gap: 5px;
    padding-left: 3px;
`;

const TreeLeafRow = styled.div`
    height: 24px;
    display: flex;
    align-items: center;
    padding-left: 40px;
`;

const TreeLeaf = styled.div`
    width: 110px;
    height: 21px;
    box-sizing: border-box;
    display: flex;
    align-items: center;
    gap: 5px;
    padding-left: 4px;
    white-space: nowrap;
    background: ${(p) => (p.$on ? '#c6d8f0' : 'transparent')};
`;

const ScrollThumb = styled.div`
    position: absolute;
    left: 266px;
    top: 315px;
    bottom: 0;
    width: 8px;
    border-radius: 4px 4px 0 0;
    background: #c8c8c8;
`;

const MiddleColumn = styled.div`
    width: 276px;
    flex: none;
    margin-left: 4px;
    margin-right: 4px;
    display: flex;
    flex-direction: column;
    gap: 5px;
`;

const ListPanel = styled.div`
    height: 512px;
    flex: none;
    box-sizing: border-box;
    border: 1px solid #c8c8cc;
    border-top: none;
    display: flex;
    flex-direction: column;
`;

const PropPanel = styled.div`
    flex: 1;
    min-height: 0;
    box-sizing: border-box;
    border: 1px solid #c8c8cc;
    border-bottom: none;
    display: flex;
    flex-direction: column;
`;

const PanelTabs = styled.div`
    height: 23px;
    flex: none;
    box-sizing: border-box;
    display: flex;
    background: #efefef;
    border-bottom: 1px solid #c8c8d0;
`;

const PanelTab = styled.div`
    width: 65px;
    text-align: center;
    line-height: 24px;
    font-weight: ${(p) => (p.$on ? 'bold' : 'normal')};
    color: ${(p) => (p.$on ? '#333' : '#8c8c8c')};
    background: ${(p) => (p.$on ? '#efefef' : '#dcdcdc')};
    border-right: ${(p) => (p.$on ? 'none' : '1px solid #c8c8d0')};
`;

const ListTools = styled.div`
    height: 27px;
    flex: none;
    box-sizing: border-box;
    display: flex;
    align-items: center;
    background: #efefef;
    border-bottom: 1px solid #c8c8d0;
    padding-left: 6px;
`;

const ListTool = styled.div`
    width: ${(p) => p.$w}px;
    flex: none;
    display: flex;
    align-items: center;
    gap: 3px;
    white-space: nowrap;
`;

const MoreMark = styled.span`
    font-size: 9px;
    margin-left: 4px;
    letter-spacing: -2px;
    color: #333;
`;

const SearchRow = styled.div`
    height: 20px;
    flex: none;
    box-sizing: border-box;
    display: flex;
    align-items: center;
    justify-content: space-between;
    padding: 1px 4px 0 2px;
    color: #888;
    border-bottom: 1px solid #c8c8d0;
`;

const ListTree = styled.div`
    flex: 1;
    padding-top: 5px;
`;

const ListGroup = styled.div`
    height: 21px;
    display: flex;
    align-items: center;
    padding-left: 11px;
    gap: 7px;
`;

const Triangle = styled.span`
    width: 0;
    height: 0;
    border-left: 5px solid transparent;
    border-bottom: 5px solid #444;
`;

const ListEntry = styled.div`
    margin: 2px 0 0 40px;
    width: 43px;
    height: 21px;
    line-height: 22px;
    text-align: center;
    background: #b3cdea;
    font-size: 13px;
`;

const PropTable = styled.div`
    flex: 1;
    min-height: 0;
    display: flex;
    flex-direction: column;
    margin-right: 1px;
`;

const PropRow = styled.div`
    height: ${(p) => (p.$head ? 20 : 21)}px;
    flex: none;
    box-sizing: border-box;
    display: grid;
    grid-template-columns: 22px 100px 109px 42px;
    border-bottom: 1px solid #d0d0d0;
    background: ${(p) => (p.$head ? '#efefef' : '#fff')};
`;

const NumCell = styled.div`
    background: #efefef;
    text-align: center;
    line-height: 21px;
    color: #444;
    border-right: 1px solid #d0d0d0;
    font-size: 13px;
`;

const HeadCell = styled.div`
    text-align: center;
    line-height: 20px;
    color: #444;
    border-right: 1px solid #d0d0d0;
`;

const NameCell = styled.div`
    display: flex;
    align-items: center;
    padding: 1px 0 0 3px;
    white-space: nowrap;
    color: ${(p) => (p.$blue ? '#2a6ae0' : '#222')};
    border-right: 1px solid #d0d0d0;
`;

const ValueCell = styled.div`
    padding-left: 3px;
    line-height: 21px;
    white-space: nowrap;
    background: ${(p) => (p.$group ? '#ebebeb' : 'transparent')};
    border-right: 1px solid #d0d0d0;
`;

const ExtraCell = styled.div`
    display: flex;
    align-items: center;
    justify-content: center;
    border-right: 1px solid #d0d0d0;
`;

const PlusBox = styled.span`
    width: 13px;
    height: 13px;
    box-sizing: border-box;
    border: 1px solid #888;
    border-radius: 2px;
    margin: 0 6px 0 -1px;
    display: flex;
    align-items: center;
    justify-content: center;
    font-size: 12px;
    line-height: 11px;
`;

const CheckBox = styled.span`
    width: 14px;
    height: 14px;
    box-sizing: border-box;
    border: 1px solid #888;
    border-radius: 2px;
    background: #fff;
`;

const PropFiller = styled.div`
    flex: 1;
    width: 22px;
    background: #efefef;
`;

const Canvas = styled.div`
    position: relative;
    width: 1083px;
    flex: none;
    overflow: hidden;
    background: #000;
`;

const CanvasLabel = styled.text`
    fill: #fff;
    font-size: 16px;
    font-family: "Liberation Sans", sans-serif;
`;

const SplitHandle = styled.div`
    position: absolute;
    top: 373px;
    height: 100px;
    width: 4px;
    background: #6d7680;
    ${(p) => (p.$side === 'left' ? 'left: -2px;' : 'right: 0;')}
`;

const ViewTools = styled.div`
    position: absolute;
    top: 0;
    right: 1px;
    width: 32px;
    height: 226px;
    box-sizing: border-box;
    background: #9a9b9f;
    padding-top: 12px;
    display: flex;
    flex-direction: column;
    align-items: center;
    gap: 6px;
`;

const GlobeWrap = styled.div`
    flex: none;
    margin-bottom: 2px;
`;

const ViewBox = styled.div`
    width: 24px;
    height: 22px;
    box-sizing: border-box;
    flex: none;
    background: #7d8ea4;
    border: 1px solid #3f4a58;
    color: #1d2530;
    font-size: 8px;
    line-height: 10px;
    text-align: right;
    padding: 10px 1px 0 0;
`;

const SmallDown = styled.span`
    flex: none;
    width: 0;
    height: 0;
    border-left: 4px solid transparent;
    border-right: 4px solid transparent;
    border-top: 3px solid #444;
`;

const ViewRule = styled.div`
    width: 24px;
    height: 1px;
    flex: none;
    margin-bottom: -2px;
    background: #6a6a6a;
`;

const LayerPanel = styled.div`
    flex: 1;
    min-width: 0;
    padding-left: 4px;
`;

const LayerInner = styled.div`
    height: 100%;
    overflow: hidden;
    border-left: 1px solid #dcdcdc;
    display: flex;
    flex-direction: column;
`;

const LayerTitle = styled.div`
    height: 25px;
    flex: none;
    background: #f0f0f0;
    color: #888;
    padding-left: 7px;
    line-height: 24px;
    white-space: nowrap;
    border-bottom: 1px solid #d8d8d8;
`;

const LayerTabs = styled.div`
    height: 27px;
    flex: none;
    padding: 2px 0 0 3px;
    box-sizing: border-box;
    background: #f0f0f0;
`;

const LayerTab = styled.div`
    height: 25px;
    background: #fff;
    border-radius: 4px 0 0 0;
    color: #2a7ae8;
    padding-left: 12px;
    line-height: 24px;
    white-space: nowrap;
`;

const LayerGrid = styled.div`
    flex: 1;
    margin-left: 1px;
    border-left: 2px solid #c8c8c8;
    overflow: hidden;
`;

const LayerHead = styled.div`
    height: 21px;
    background: #f0f0f0;
    border-bottom: 1px solid #e2e2e2;
    border-top: 1px solid #dcdcdc;
    box-sizing: border-box;
`;

const LayerRow = styled.div`
    height: 21px;
    box-sizing: border-box;
    border-bottom: 1px solid #e4e4e4;
    display: flex;
    align-items: center;
    gap: 7px;
    white-space: nowrap;
    padding-left: ${(p) => (p.$level === 0 ? 1 : 11)}px;
    margin-left: ${(p) => (p.$level === 2 ? 17 : 0)}px;
    border-left: ${(p) => (p.$level === 2 ? '1px solid #e4e4e4' : 'none')};
`;

const MinusBox = styled.span`
    width: 12px;
    height: 12px;
    flex: none;
    box-sizing: border-box;
    border: 1px solid #888;
    border-radius: 2px;
    background: #fff;
    display: flex;
    align-items: center;
    justify-content: center;
    font-size: 11px;
    line-height: 10px;
`;

const ArrowLayer = styled.svg`
    position: absolute;
    left: 0;
    top: 0;
    pointer-events: none;
`;
